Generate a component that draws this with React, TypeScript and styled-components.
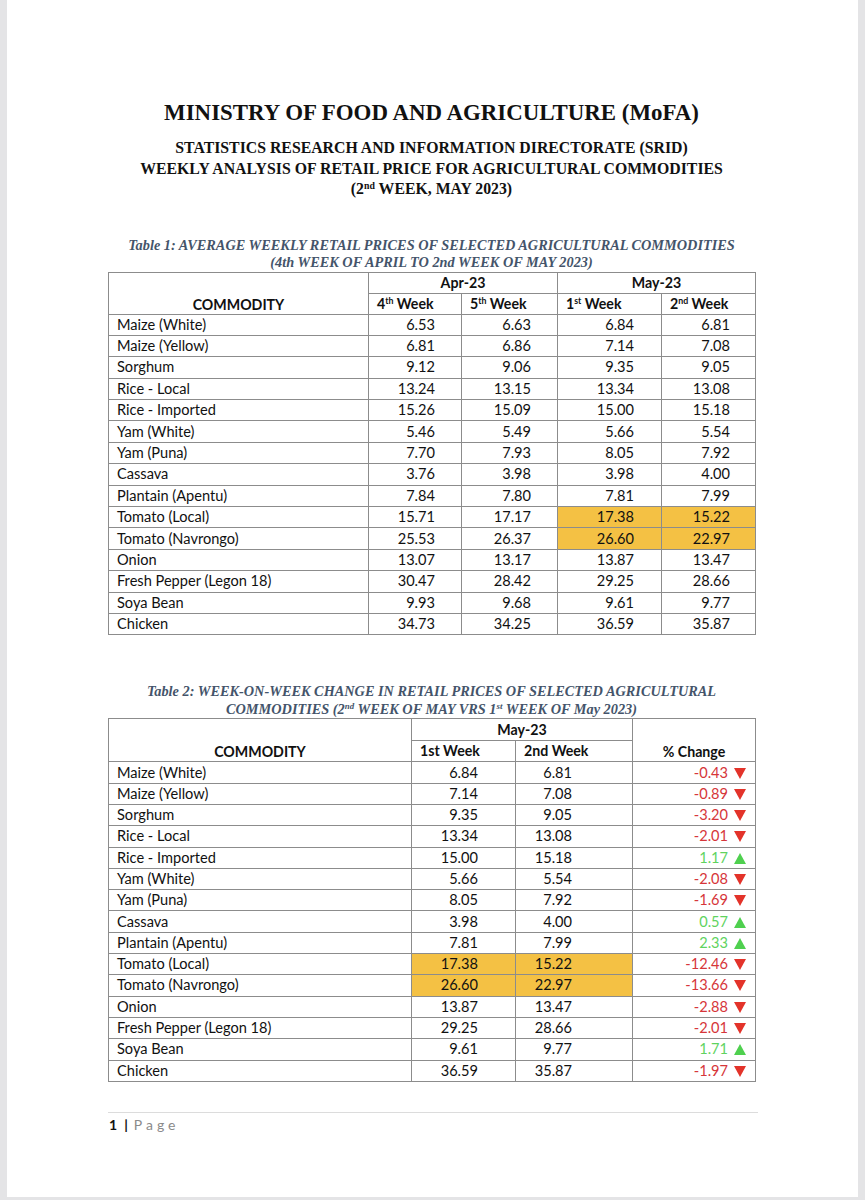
import React from "react";
import styled, { createGlobalStyle } from "styled-components";

const GlobalStyle = createGlobalStyle`
  html, body {
    margin: 0;
    padding: 0;
    background: #e4e4e6;
  }
  body {
    font-family: "Lato", "Liberation Sans", sans-serif;
  }
`;

const Page = styled.div`
  margin: 0 7px;
  width: 851px;
  min-height: 1197px;
  background: #ffffff;
  box-sizing: border-box;
  padding: 100px 0 0 101px;
  display: flex;
  flex-direction: column;
  align-items: flex-start;
`;

const Block = styled.div`
  width: 647px;
  display: flex;
  flex-direction: column;
  align-items: center;
`;

const Title = styled.h1`
  margin: 0;
  font-family: "Liberation Serif", "Times New Roman", serif;
  font-weight: 700;
  font-size: 22.9px;
  line-height: 26px;
  color: #111;
  text-align: center;
  white-space: nowrap;
`;

const Subtitle = styled.h2`
  margin: 12px 0 0;
  font-family: "Liberation Serif", "Times New Roman", serif;
  font-weight: 700;
  font-size: 15.8px;
  line-height: 20.5px;
  color: #111;
  text-align: center;
  white-space: nowrap;
`;

const Sup = styled.sup`
  font-size: 0.62em;
  line-height: 0;
  vertical-align: 0.55em;
`;

const Caption = styled.div<{ $mt: number }>`
  margin-top: ${(p) => p.$mt}px;
  font-family: "Liberation Serif", "Times New Roman", serif;
  font-weight: 700;
  font-style: italic;
  font-size: 14.3px;
  line-height: 17.5px;
  color: #44546a;
  text-align: center;
  white-space: nowrap;
`;

const Table = styled.table`
  width: 647px;
  border-collapse: collapse;
  table-layout: fixed;
  font-family: "Lato", "Liberation Sans", sans-serif;
  font-size: 14.6px;
  color: #111;
`;

const Row = styled.tr<{ $h: number }>`
  height: ${(p) => p.$h}px;
`;

const Cell = styled.td<{ $align?: string; $pr?: number; $hl?: boolean; $bold?: boolean; $valign?: string }>`
  border: 1px solid #8c8c8c;
  padding: 0 ${(p) => (p.$pr !== undefined ? p.$pr : 8)}px 0 8px;
  text-align: ${(p) => p.$align || "left"};
  vertical-align: ${(p) => p.$valign || "middle"};
  background: ${(p) => (p.$hl ? "#f4c144" : "transparent")};
  font-weight: ${(p) => (p.$bold ? 700 : 400)};
  white-space: nowrap;
  line-height: 18px;
`;

const HeadCell = styled(Cell).attrs({ as: "th" })`
  font-size: 14.2px;
`;

const ChangeText = styled.span<{ $up: boolean }>`
  color: ${(p) => (p.$up ? "#5fd35f" : "#d6363a")};
`;

const ArrowSvg = styled.svg`
  display: inline-block;
  width: 12px;
  height: 11px;
  margin-left: 6px;
  vertical-align: -1px;
`;

const Arrow = ({ up }: { up: boolean }) => (
  <ArrowSvg viewBox="0 0 12 11">
    {up ? (
      <polygon points="6,0 12,11 0,11" fill="#4fd04f" />
    ) : (
      <polygon points="0,0 12,0 6,11" fill="#e3332a" />
    )}
  </ArrowSvg>
);

const Footer = styled.div`
  margin-top: 30px;
  width: 650px;
  border-top: 1.5px solid #dcdcdc;
  padding-top: 3px;
  display: flex;
  align-items: center;
  font-family: "Lato", "Liberation Sans", sans-serif;
  font-size: 14px;
  line-height: 17px;
`;

const PageNum = styled.span`
  font-weight: 700;
  color: #111;
  margin-left: 1px;
`;

const Bar = styled.span`
  font-weight: 700;
  color: #111;
  margin: 0 6px 0 7px;
`;

const PageWord = styled.span`
  color: #8a8a8a;
  letter-spacing: 4px;
`;

type R1 = [string, string, string, string, string, boolean?];
const table1: R1[] = [
  ["Maize (White)", "6.53", "6.63", "6.84", "6.81"],
  ["Maize (Yellow)", "6.81", "6.86", "7.14", "7.08"],
  ["Sorghum", "9.12", "9.06", "9.35", "9.05"],
  ["Rice - Local", "13.24", "13.15", "13.34", "13.08"],
  ["Rice - Imported", "15.26", "15.09", "15.00", "15.18"],
  ["Yam (White)", "5.46", "5.49", "5.66", "5.54"],
  ["Yam (Puna)", "7.70", "7.93", "8.05", "7.92"],
  ["Cassava", "3.76", "3.98", "3.98", "4.00"],
  ["Plantain (Apentu)", "7.84", "7.80", "7.81", "7.99"],
  ["Tomato (Local)", "15.71", "17.17", "17.38", "15.22", true],
  ["Tomato (Navrongo)", "25.53", "26.37", "26.60", "22.97", true],
  ["Onion", "13.07", "13.17", "13.87", "13.47"],
  ["Fresh Pepper (Legon 18)", "30.47", "28.42", "29.25", "28.66"],
  ["Soya Bean", "9.93", "9.68", "9.61", "9.77"],
  ["Chicken", "34.73", "34.25", "36.59", "35.87"],
];

const changes = [
  "-0.43", "-0.89", "-3.20", "-2.01", "1.17", "-2.08", "-1.69", "0.57",
  "2.33", "-12.46", "-13.66", "-2.88", "-2.01", "1.71", "-1.97",
];

const RH = 21.4;

export default function App() {
  return (
    <>
      <GlobalStyle />
      <Page>
        <Block>
          <Title>MINISTRY OF FOOD AND AGRICULTURE (MoFA)</Title>
          <Subtitle>
            STATISTICS RESEARCH AND INFORMATION DIRECTORATE (SRID)
            <br />
            WEEKLY ANALYSIS OF RETAIL PRICE FOR AGRICULTURAL COMMODITIES
            <br />
            (2<Sup>nd</Sup> WEEK, MAY 2023)
          </Subtitle>
          <Caption $mt={37}>
            Table 1: AVERAGE WEEKLY RETAIL PRICES OF SELECTED AGRICULTURAL COMMODITIES
            <br />
            (4th WEEK OF APRIL TO 2nd WEEK OF MAY 2023)
          </Caption>
        </Block>
        <Table>
          <colgroup>
            <col style={{ width: 260 }} />
            <col style={{ width: 93 }} />
            <col style={{ width: 96 }} />
            <col style={{ width: 104 }} />
            <col style={{ width: 94 }} />
          </colgroup>
          <thead>
            <Row $h={21}>
              <HeadCell rowSpan={2} $align="center" $bold $valign="bottom">
                COMMODITY
              </HeadCell>
              <HeadCell colSpan={2} $align="center" $bold>
                Apr-23
              </HeadCell>
              <HeadCell colSpan={2} $align="center" $bold>
                May-23
              </HeadCell>
            </Row>
            <Row $h={21}>
              <HeadCell $bold>
                4<Sup>th</Sup> Week
              </HeadCell>
              <HeadCell $bold>
                5<Sup>th</Sup> Week
              </HeadCell>
              <HeadCell $bold>
                1<Sup>st</Sup> Week
              </HeadCell>
              <HeadCell $bold>
                2<Sup>nd</Sup> Week
              </HeadCell>
            </Row>
          </thead>
          <tbody>
            {table1.map((r) => (
              <Row $h={RH} key={r[0]}>
                <Cell>{r[0]}</Cell>
                <Cell $align="right" $pr={26}>{r[1]}</Cell>
                <Cell $align="right" $pr={26}>{r[2]}</Cell>
                <Cell $align="right" $pr={27} $hl={!!r[5]}>{r[3]}</Cell>
                <Cell $align="right" $pr={25} $hl={!!r[5]}>{r[4]}</Cell>
              </Row>
            ))}
          </tbody>
        </Table>
        <Block>
          <Caption $mt={48}>
            Table 2: WEEK-ON-WEEK CHANGE IN RETAIL PRICES OF SELECTED AGRICULTURAL
            <br />
            COMMODITIES (2<Sup>nd</Sup> WEEK OF MAY VRS 1<Sup>st</Sup> WEEK OF May 2023)
          </Caption>
        </Block>
        <Table>
          <colgroup>
            <col style={{ width: 303 }} />
            <col style={{ width: 104 }} />
            <col style={{ width: 117 }} />
            <col style={{ width: 123 }} />
          </colgroup>
          <thead>
            <Row $h={21.5}>
              <HeadCell rowSpan={2} $align="center" $bold $valign="bottom">
                COMMODITY
              </HeadCell>
              <HeadCell colSpan={2} $align="center" $bold>
                May-23
              </HeadCell>
              <HeadCell rowSpan={2} $align="center" $bold $valign="bottom">
                % Change
              </HeadCell>
            </Row>
            <Row $h={21.5}>
              <HeadCell $bold>1st Week</HeadCell>
              <HeadCell $bold>2nd Week</HeadCell>
            </Row>
          </thead>
          <tbody>
            {table1.map((r, i) => {
              const c = changes[i];
              const up = !c.startsWith("-");
              return (
                <Row $h={21.3} key={r[0]}>
                  <Cell>{r[0]}</Cell>
                  <Cell $align="right" $pr={37} $hl={!!r[5]}>{r[3]}</Cell>
                  <Cell $align="right" $pr={60} $hl={!!r[5]}>{r[4]}</Cell>
                  <Cell $align="right" $pr={9}>
                    <ChangeText $up={up}>{c}</ChangeText>
                    <Arrow up={up} />
                  </Cell>
                </Row>
              );
            })}
          </tbody>
        </Table>
        <Footer>
          <PageNum>1</PageNum>
          <Bar>|</Bar>
          <PageWord>Page</PageWord>
        </Footer>
      </Page>
    </>
  );
}
